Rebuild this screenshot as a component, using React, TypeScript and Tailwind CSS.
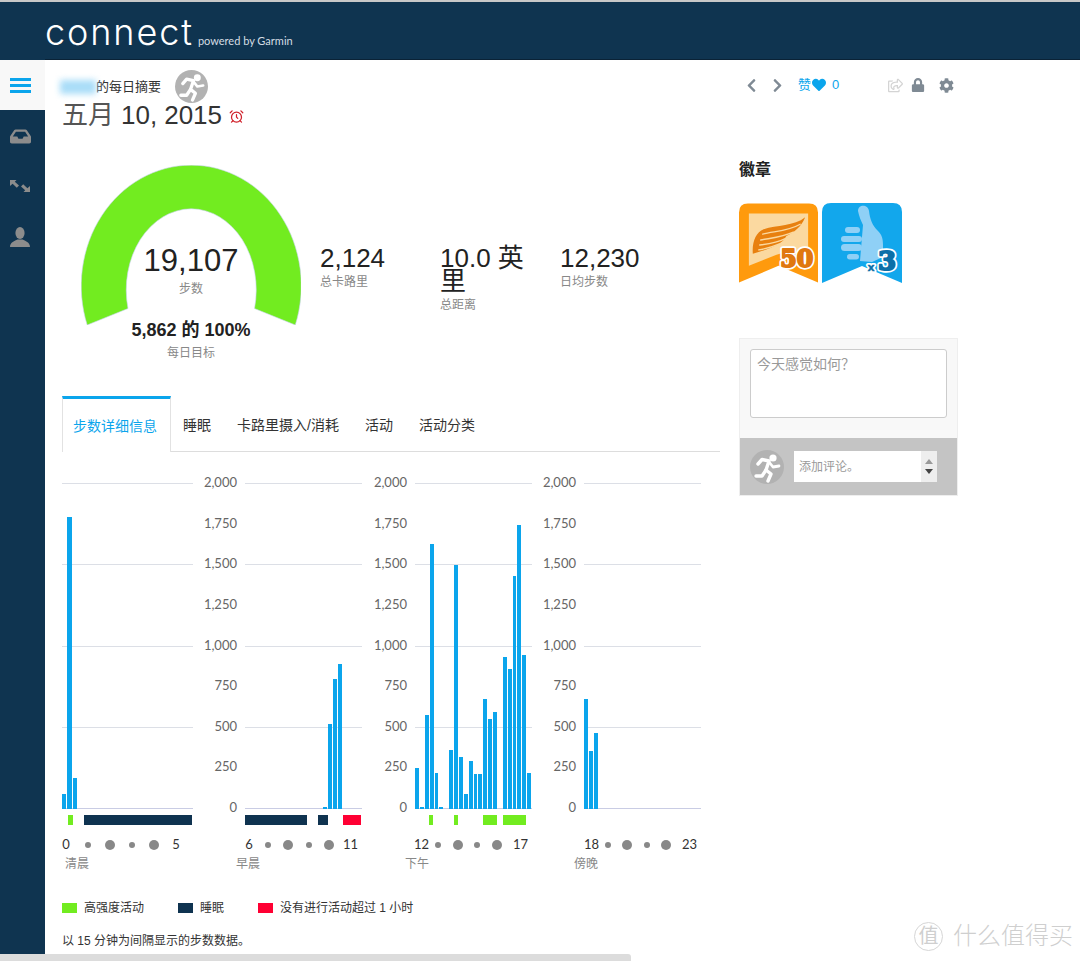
import { FaChevronLeft, FaChevronRight, FaCog, FaHeart, FaInbox, FaLock, FaRegShareSquare } from "react-icons/fa";
import { AlarmClock } from "lucide-react";

const SANS = "font-['Liberation_Sans','Noto_Sans_CJK_SC',sans-serif]";
const TICK = "font-['Lato','Noto_Sans_CJK_SC',sans-serif]";

const ticks = ["2,000", "1,750", "1,500", "1,250", "1,000", "750", "500", "250", "0"];

type Seg = { from: number; to: number; color: string };

const GREEN = "#72ec20";
const NAVY = "#0f3350";
const RED = "#ff0033";

const panels = [
  {
    label: "清晨",
    plotW: "w-[131px]",
    axisW: "",
    labelPos: "ml-[3px]",
    hourRow: "w-[124px] -ml-[3px]",
    dotShift: "",
    hours: ["0", "5"],
    bars: [90, 1800, 190],
    segs: [
      { from: 6, to: 11, color: GREEN },
      { from: 22, to: 130, color: NAVY },
    ] as Seg[],
  },
  {
    label: "早晨",
    plotW: "w-[117px]",
    axisW: "w-[52px]",
    labelPos: "-ml-[9px]",
    hourRow: "w-[115px] -ml-[3px]",
    dotShift: "-translate-x-[1px]",
    hours: ["6", "11"],
    bars: [0, 0, 0, 0, 0, 0, 0, 0, 0, 0, 0, 0, 0, 0, 0, 0, 10, 525, 800, 890],
    segs: [
      { from: 0, to: 62, color: NAVY },
      { from: 73, to: 83, color: NAVY },
      { from: 98, to: 116, color: RED },
    ] as Seg[],
  },
  {
    label: "下午",
    plotW: "w-[117px]",
    axisW: "w-[53px]",
    labelPos: "-ml-[10px]",
    hourRow: "w-[113px] -ml-px",
    dotShift: "-translate-x-[3px]",
    hours: ["12", "17"],
    bars: [255, 10, 580, 1630, 220, 10, 0, 365, 1500, 320, 90, 295, 215, 215, 675, 555, 600, 0, 935, 860, 1435, 1750, 945, 220],
    segs: [
      { from: 14, to: 18, color: GREEN },
      { from: 39, to: 43, color: GREEN },
      { from: 68, to: 82, color: GREEN },
      { from: 88, to: 111, color: GREEN },
    ] as Seg[],
  },
  {
    label: "傍晚",
    plotW: "w-[117px]",
    axisW: "w-[52px]",
    labelPos: "-ml-[10px]",
    hourRow: "w-[112px]",
    dotShift: "-translate-x-[3px]",
    hours: ["18", "23"],
    bars: [680, 355, 465],
    segs: [] as Seg[],
  },
];

function Runner({ className }: { className: string }) {
  return (
    <svg viewBox="0 0 34 34" className={className}>
      <circle cx="17" cy="17" r="17" fill="#b2b2b2" />
      <circle cx="23" cy="8" r="3.6" fill="#fff" />
      <path d="M8 14 L12 9.5 L19 11 L16 20 L21 24 L18 31" fill="none" stroke="#fff" strokeWidth="3.4" strokeLinecap="round" strokeLinejoin="round" />
      <path d="M19 12 L23 17 L29 16" fill="none" stroke="#fff" strokeWidth="2.8" strokeLinecap="round" strokeLinejoin="round" />
      <path d="M16 20 L12 26 L6 26" fill="none" stroke="#fff" strokeWidth="3.4" strokeLinecap="round" strokeLinejoin="round" />
    </svg>
  );
}

function BadgeNum({ x, y, size, fill, children, family, weight }: { x: number; y: number; size: number; fill: string; children: string; family: string; weight: number }) {
  return (
    <g textAnchor="middle" fontFamily={family} fontWeight="700" fontSize={size} strokeLinejoin="round">
      <text x={x} y={y} fill="#fff" stroke="#fff" strokeWidth={weight + 3.4}>{children}</text>
      <text x={x} y={y} fill={fill} stroke={fill} strokeWidth={weight}>{children}</text>
    </g>
  );
}

function WingBadge() {
  return (
    <svg viewBox="0 0 80 80" className="w-[79px] h-20">
      <path d="M0 9 Q0 0 9 0 H71 Q80 0 80 9 V80 L40 63 L0 80 Z" fill="#ff9a0d" />
      <path d="M10 10 H70 V50 H44 L38 52 L10 63 Z" fill="#fbd9a0" />
      <path d="M14 51 C13 39 17 29 25 26 C38 22 56 23 67 14 C63 24 56 29 48 33 C44 42 30 46 14 51 Z" fill="#e8800f" />
      <g stroke="#fbd9a0" strokeWidth="1.4" fill="none" strokeLinecap="round">
        <path d="M24 31 C36 28 50 28 62 21" />
        <path d="M22 37 C32 35 44 34 55 29" />
        <path d="M21 42 C30 41 40 39 48 35" />
        <path d="M20 47 C27 46 34 44 41 41" />
      </g>
      <BadgeNum x={58.5} y={64} size={24} fill="#e0780f" family="DejaVu Serif" weight={2}>50</BadgeNum>
    </svg>
  );
}

function ThumbBadge() {
  return (
    <svg viewBox="0 0 80 80" className="w-20 h-20">
      <path d="M0 9 Q0 0 9 0 H71 Q80 0 80 9 V80 L40 63 L0 80 Z" fill="#12a7ec" />
      <path d="M36 8 C36 1 46 1 47 8 C48 16 50 22 56 28 C60 32 61 36 61 42 V54 L50 59 L38 58 L41 22 C39 18 37 13 36 8 Z" fill="#8fd0f6" />
      <g fill="#8fd0f6">
        <rect x="23" y="24" width="15" height="6" rx="3" />
        <rect x="19" y="33" width="21" height="6" rx="3" />
        <rect x="19" y="41" width="21" height="7" rx="3.5" />
        <rect x="25" y="51" width="12" height="5.5" rx="2.7" />
      </g>
      <BadgeNum x={49} y={68} size={11} fill="#0c6fa8" family="DejaVu Sans" weight={0.4}>x</BadgeNum>
      <BadgeNum x={65} y={66.5} size={26} fill="#0c6fa8" family="DejaVu Serif" weight={2}>3</BadgeNum>
    </svg>
  );
}

function Gauge() {
  return (
    <div className="relative w-[220px] ml-[19px] shrink-0">
      <svg viewBox="0 0 220 160" className="w-[220px] h-[160px] block">
        <path d="M6.2 160 A110 120.7 0 1 1 214.3 160 L173.5 143.5 A65 81 0 1 0 47 143.5 Z" fill="#72ec20" stroke="#c7d3ee" strokeWidth="0.6" />
      </svg>
      <div className="absolute top-[78px] inset-x-0 text-center text-[31px] leading-9 text-[#222]">19,107</div>
      <div className="absolute top-[116px] inset-x-0 text-center text-xs leading-4 text-[#888]">步数</div>
      <div className="-mt-[5px] text-center text-[18px] leading-5 font-semibold text-[#222]">5,862 的 100%</div>
      <div className="mt-[5px] text-center text-xs leading-4 text-[#888]">每日目标</div>
    </div>
  );
}

function Stat({ value, label }: { value: string; label: string }) {
  return (
    <div className="w-[120px] pr-[20px] pt-[82px]">
      <div className="text-[26px] leading-[23px] text-[#222]">{value}</div>
      <div className="mt-1 text-xs leading-4 text-[#888]">{label}</div>
    </div>
  );
}

function Panel({ p }: { p: (typeof panels)[number] }) {
  const w = p.plotW === "w-[131px]" ? 131 : 117;
  return (
    <div className="flex">
      {p.axisW && (
        <div className={`${p.axisW} h-[341px] -mt-px pr-[8px] flex flex-col justify-between text-right text-[13px] text-[#666] ${TICK}`}>
          {ticks.map((t) => (
            <div key={t} className="h-4 leading-4">{t}</div>
          ))}
        </div>
      )}
      <div className={p.plotW}>
        <div className="relative h-[340px] pt-2 pb-[6px]">
          <div className="h-full flex flex-col justify-between">
            <div className="h-px bg-[#dcdfe6]" />
            <div className="h-px bg-[#dcdfe6]" />
            <div className="h-px bg-[#dcdfe6]" />
            <div className="h-px bg-[#dcdfe6]" />
            <div className="h-px bg-[#c9cce4]" />
          </div>
          <div className="absolute left-0 right-0 bottom-[6px] flex items-end">
            {p.bars.map((v, i) => (
              <div
                key={i}
                className="bg-[#0ba5ec] mr-px shrink-0"
                style={{ height: v * 0.1625, width: w / 24 - 1 }}
              />
            ))}
          </div>
        </div>
        <div className="relative h-[10px]">
          {p.segs.map((s) => (
            <div
              key={s.from}
              className="absolute top-0 bottom-0"
              style={{ left: s.from, width: s.to - s.from, backgroundColor: s.color }}
            />
          ))}
        </div>
        <div className={`mt-3 h-4 flex justify-between items-center text-[13px] text-[#333] ${TICK} ${p.hourRow}`}>
          <span className="w-[14px] text-center">{p.hours[0]}</span>
          <span className={`w-[14px] flex justify-center ${p.dotShift}`}><span className="w-[6px] h-[6px] rounded-full bg-[#888]" /></span>
          <span className={`w-[14px] flex justify-center ${p.dotShift}`}><span className="w-[10px] h-[10px] rounded-full bg-[#888]" /></span>
          <span className={`w-[14px] flex justify-center ${p.dotShift}`}><span className="w-[6px] h-[6px] rounded-full bg-[#888]" /></span>
          <span className={`w-[14px] flex justify-center ${p.dotShift}`}><span className="w-[10px] h-[10px] rounded-full bg-[#888]" /></span>
          <span className="w-[14px] text-center whitespace-nowrap">{p.hours[1]}</span>
        </div>
        <div className={`mt-[3px] h-4 leading-4 text-xs text-[#888] ${p.labelPos}`}>{p.label}</div>
      </div>
    </div>
  );
}

function Legend({ color, label, className }: { color: string; label: string; className: string }) {
  return (
    <div className={`flex items-center ${className}`}>
      <span className={`w-[15px] h-[10px] mr-[7px] ${color}`} />
      <span>{label}</span>
    </div>
  );
}

export default function App() {
  return (
    <div className={`relative h-[961px] w-[1080px] overflow-hidden bg-white ${SANS}`}>
      {/* Header */}
      <header className="h-[59px] bg-[#0f3450] border-t-2 border-[#c8c8c8] flex items-end pl-[45px] pb-[7px]">
        <span className="font-['Inter',sans-serif] font-light text-[36px] leading-[40px] tracking-[1.9px] text-white">connect</span>
        <span className="ml-[4px] mb-[3px] font-['Lato',sans-serif] text-[11px] leading-4 text-[#d5dde3]">powered by Garmin</span>
      </header>
      <div className="h-px bg-[#0a2236] border-l-[45px] border-[#0f3450]" />

      <div className="flex">
        {/* Sidebar */}
        <aside className="w-[45px] h-[901px] pr-[5px] bg-[#0f3450] shrink-0 text-[#8c8c8c]">
          <div className="h-[50px] -mr-[5px] pl-[10px] bg-[#f8f8f8] flex flex-col justify-center gap-[3px]">
            <span className="w-[21px] h-[3px] bg-[#0ba5ec]" />
            <span className="w-[21px] h-[3px] bg-[#0ba5ec]" />
            <span className="w-[21px] h-[3px] bg-[#0ba5ec]" />
          </div>
          <div className="h-[50px] pt-[2px] flex items-center justify-center"><FaInbox size={21} /></div>
          <div className="h-[50px] pt-[2px] flex items-center justify-center">
            <svg viewBox="0 0 20 12" className="w-[20px] h-[12px]" fill="currentColor">
              <path d="M0 0 H6.5 L4.8 1.7 L9 5.6 L6.8 7.8 L2.6 3.8 L0 6 Z" />
              <path d="M20 12 H13.5 L15.2 10.3 L11 6.4 L13.2 4.2 L17.4 8.2 L20 6 Z" />
            </svg>
          </div>
          <div className="h-[50px] pt-[4px] flex items-center justify-center">
            <svg viewBox="0 0 20 20" className="w-[20px] h-[20px]" fill="currentColor">
              <ellipse cx="10" cy="6" rx="4.6" ry="6" />
              <path d="M0 20 C0 15 5 14 7.4 12.5 H12.6 C15 14 20 15 20 20 Z" />
            </svg>
          </div>
        </aside>

        {/* Left column */}
        <main className="w-[658px] ml-[17px] shrink-0">
          <div className="pt-[10px] h-[43px] flex items-center">
            <span className="-ml-[2px] w-[36px] h-[14px] bg-[#a9ddf8] blur-[3px]" />
            <span className="text-[13px] text-[#333]">的每日摘要</span>
            <Runner className="ml-[14px] w-[33px] h-[33px]" />
          </div>
          <div className="h-[28px] -mt-[2px] flex items-center text-[#333]">
            <span className="text-[26px] leading-7 tracking-[-0.05px]"><span className="text-[#555]">五月</span> 10, 2015</span>
            <AlarmClock className="ml-[7px] mt-[2px] text-[#d0202a]" size={15} strokeWidth={2} />
          </div>

          <div className="mt-[36px] flex items-start">
            <Gauge />
            <div className="ml-[19px] flex">
              <Stat value="2,124" label="总卡路里" />
              <Stat value="10.0 英里" label="总距离" />
              <Stat value="12,230" label="日均步数" />
            </div>
          </div>

          {/* Tabs */}
          <div className="mt-[35px] h-[56px] flex border-b border-[#ddd] text-sm text-[#333]">
            <div className="h-[56px] pl-[10px] pr-[13px] flex items-center border-t-[3px] border-x border-t-[#0ba5ec] border-x-[#e2e2e2] bg-white text-[#0ba5ec]">步数详细信息</div>
            <div className="pl-[12px] pr-[12px] pt-[3px] flex items-center">睡眠</div>
            <div className="pl-[14px] pr-[13px] pt-[3px] flex items-center">卡路里摄入/消耗</div>
            <div className="px-[13px] pt-[3px] flex items-center">活动</div>
            <div className="px-[13px] pt-[3px] flex items-center">活动分类</div>
          </div>

          {/* Charts */}
          <div className="mt-[23px] flex">
            {panels.map((p) => (
              <Panel key={p.label} p={p} />
            ))}
          </div>

          <div className="mt-[28px] h-4 flex items-center text-xs text-[#333]">
            <Legend color="bg-[#72ec20]" label="高强度活动" className="w-[116px]" />
            <Legend color="bg-[#0f3350]" label="睡眠" className="w-[80px]" />
            <Legend color="bg-[#ff0033]" label="没有进行活动超过 1 小时" className="" />
          </div>
          <p className="mt-[17px] text-xs leading-4 text-[#333]">以 15 分钟为间隔显示的步数数据。</p>
        </main>

        {/* Right column */}
        <section className="w-[219px] ml-[19px] shrink-0">
          <div className="h-[50px] flex items-center text-[#7f8a94]">
            <FaChevronLeft size={15} className="ml-[5px]" />
            <FaChevronRight size={15} className="ml-[11px]" />
            <span className="ml-[13px] text-[13px] text-[#0ba5ec]">赞</span>
            <FaHeart size={14} className="ml-px text-[#0ba5ec]" />
            <span className="ml-[6px] text-[13px] text-[#0ba5ec]">0</span>
            <FaRegShareSquare size={15} className="ml-[49px] text-[#d4d4d4]" />
            <FaLock size={14} className="ml-[8px]" />
            <FaCog size={15} className="ml-[14px]" />
          </div>
          <h2 className="mt-[50px] h-5 leading-5 text-base font-bold text-[#222]">徽章</h2>
          <div className="mt-[23px] flex gap-1">
            <WingBadge />
            <ThumbBadge />
          </div>
          <div className="mt-[55px] h-[158px] bg-[#f8f8f8] border border-[#eee] flex flex-col">
            <div className="flex-1 px-[10px] pt-[10px]">
              <textarea
                readOnly
                placeholder="今天感觉如何？"
                className="block w-[197px] h-[69px] resize-none rounded-[3px] bg-white border border-[#ccc] px-[6px] py-[4px] text-sm leading-5 placeholder:text-[#999]"
              />
            </div>
            <div className="h-[57px] bg-[#c4c4c4] flex items-center px-[10px]">
              <Runner className="w-[34px] h-[34px]" />
              <div className="ml-[10px] w-[143px] h-[31px] bg-white flex items-center">
                <span className="flex-1 pl-[5px] text-xs text-[#999]">添加评论。</span>
                <div className="w-[16px] h-full bg-[#eee] flex flex-col items-center justify-center gap-[5px]">
                  <span className="w-0 h-0 border-x-[4px] border-x-transparent border-b-[5px] border-b-[#999]" />
                  <span className="w-0 h-0 border-x-[4px] border-x-transparent border-t-[5px] border-t-[#444]" />
                </div>
              </div>
            </div>
          </div>
        </section>
      </div>

      {/* Horizontal scrollbar */}
      <div className="absolute left-0 bottom-0 w-[631px] h-[7px] bg-[#dcdcdc] rounded-tr-[3px]" />

      {/* Watermark */}
      <div className="absolute left-[914px] top-[921px] flex items-center text-[#cfcfcf]">
        <span className="w-[29px] h-[29px] rounded-full border border-[#d6d6d6] flex items-center justify-center text-[20px] leading-none">值</span>
        <span className="ml-[10px] text-[24px] leading-[30px] font-light whitespace-nowrap">什么值得买</span>
      </div>
    </div>
  );
}
